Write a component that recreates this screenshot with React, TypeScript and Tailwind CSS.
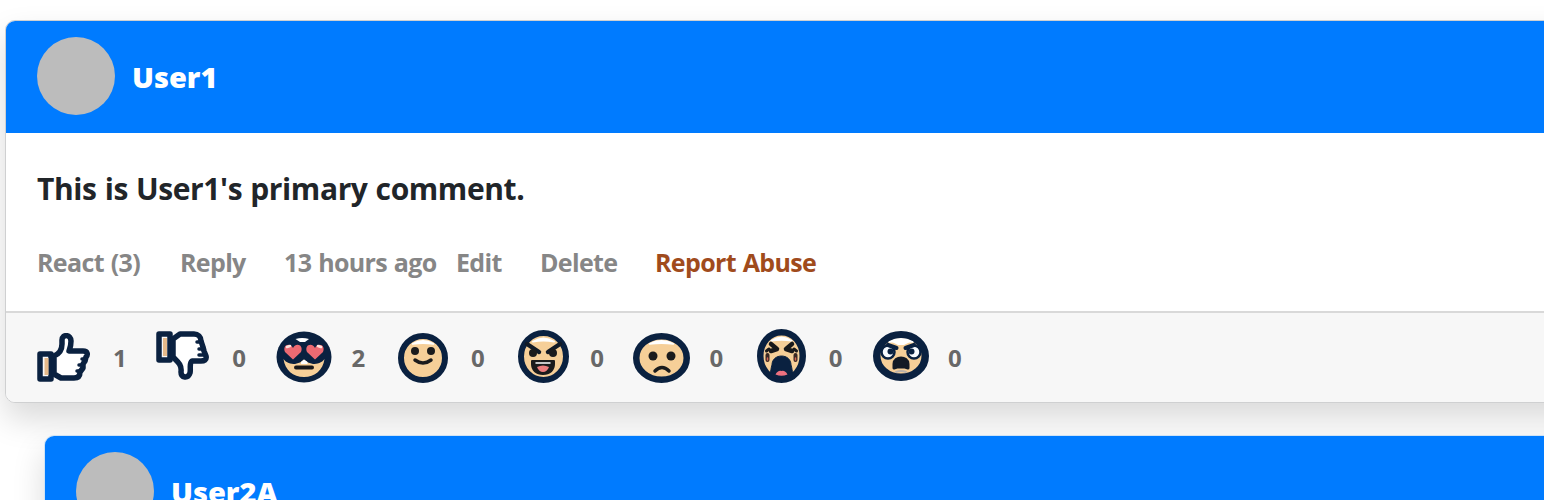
import type { ReactNode } from "react";

const INK = "#0a2140";
const SKIN = "#f6cf98";

function Icon({ w, h, dx = 0, dy, children }: { w: number; h: number; dx?: number; dy: number; children: ReactNode }) {
  return (
    <span className="flex w-[60px] justify-center">
      <svg width={w} height={h} viewBox={`0 0 ${w} ${h}`} style={{ marginTop: dy, marginLeft: dx * 2 }} className="shrink-0" fill="none" strokeLinecap="round" strokeLinejoin="round">
        {children}
      </svg>
    </span>
  );
}

function Face({ w, h, stroke = 6 }: { w: number; h: number; stroke?: number }) {
  return (
    <>
      <ellipse cx={w / 2} cy={h / 2} rx={w / 2 - stroke / 2} ry={h / 2 - stroke / 2} fill={SKIN} stroke={INK} strokeWidth={stroke} />
      <path d={`M${w * 0.29} ${h * 0.22} Q${w / 2} ${h * 0.09} ${w * 0.71} ${h * 0.22} Q${w / 2} ${h * 0.19} ${w * 0.29} ${h * 0.22}Z`} fill="#fff" stroke="#fff" strokeWidth="1.500" />
    </>
  );
}

const ThumbUp = () => (
  <Icon w={54} h={50} dy={0}>
    <path d="M3 21H14V46H3Z" fill="#f8f8f8" stroke={INK} strokeWidth="5.500" />
    <path d="M9.500 25V42" stroke="#e6ba8b" strokeWidth="4" strokeLinecap="butt" />
    <path d="M17 23C22 21 25 17 25 11V7C25 1 34 1 34 8C34 13 33 15 32 18H46C51 18 51 22 49 24L48 28L46 31L46 35L43 39C43 43 41 45 37 45H24L17 41Z" fill="#fff" stroke={INK} strokeWidth="5.500" />
    <path d="M45 26H48M42 32H46M40 38H44" stroke={INK} strokeWidth="3.500" />
  </Icon>
);

const ThumbDown = () => (
  <Icon w={54} h={50} dy={-5}>
    <path d="M3 4H14V30H3Z" fill="#f8f8f8" stroke={INK} strokeWidth="5.500" />
    <path d="M9 8V26" stroke="#e6ba8b" strokeWidth="4" strokeLinecap="butt" />
    <path d="M17 9L24 4H38C42 4 45 7 45 11L47 17L48 21L50 26C51 30 48 31 45 31H36C33 33 35 38 34 43C32 49 25 48 25 42C26 35 22 32 17 27Z" fill="#fff" stroke={INK} strokeWidth="5.500" />
    <path d="M41 12H45M43 19H46M43 25H48" stroke={INK} strokeWidth="3.500" />
  </Icon>
);

const HeartEyes = () => (
  <Icon w={56} h={52} dx={1} dy={-2}>
    <ellipse cx="28" cy="26" rx="27.500" ry="25.500" fill={INK} />
    <path d="M19.500 8Q26 6 33 8L29 11H24Z" fill="#fff" />
    <path d="M7.500 28C10 32 15 33 19 33L24 31.500L28 28.500L32 31.500L37 33C41 33 46 32 48.500 28C47 39 39 46 28 46C17 46 9 39 7.500 28Z" fill={SKIN} />
    <path d="M25 31L28 28.500L31.500 31V33H25Z" fill="#fff" />
    <path d="M17 28.500L9 21C6 14 14 11 17 17C20 11 28 14 25 21ZM39 28.500L31 21C28 14 36 11 39 17C42 11 50 14 47 21Z" fill="#ed6a72" />
    <path d="M11 16L14 15M42 15L45 16" stroke="#ffe4df" strokeWidth="2.500" />
    <path d="M20 36.500H36" stroke="#19191b" strokeWidth="4" />
  </Icon>
);

const Smile = () => (
  <Icon w={50} h={50} dx={1} dy={1}>
    <Face w={50} h={50} stroke={6} />
    <circle cx="17" cy="18" r="4" fill="#1b1b1c" />
    <circle cx="33" cy="18" r="4" fill="#1b1b1c" />
    <path d="M17 27Q25 33 33 27" stroke="#1b1b1c" strokeWidth="3.500" />
  </Icon>
);

const Laugh = () => (
  <Icon w={51} h={53} dx={2} dy={-2}>
    <Face w={51} h={53} />
    <path d="M9 14L21 22M42 14L30 22" stroke="#111a26" strokeWidth="4.500" />
    <circle cx="15" cy="23" r="4" fill="#1b1b1c" />
    <circle cx="35" cy="23" r="4" fill="#1b1b1c" />
    <path d="M14 31H36V34C36 40 32 44 25 44C18 44 14 40 14 34Z" fill="#1b1b1c" stroke="#1b1b1c" strokeWidth="2" />
    <path d="M18 33H32" stroke="#fff" strokeWidth="1.500" />
    <path d="M19 37Q25 34 31 37Q29 42 25 42Q21 42 19 37Z" fill="#ed7d7e" />
  </Icon>
);

const Sad = () => (
  <Icon w={57} h={50} dx={1.5} dy={1}>
    <Face w={57} h={50} stroke={6.5} />
    <circle cx="20" cy="23" r="4.500" fill="#1b1b1c" />
    <circle cx="38" cy="23" r="4.500" fill="#1b1b1c" />
    <path d="M22 38Q29 31 36 38" stroke="#1b1b1c" strokeWidth="3.500" />
  </Icon>
);

const Cry = () => (
  <Icon w={49} h={54} dx={2} dy={-3}>
    <Face w={49} h={54} stroke={6.5} />
    <path d="M14 15L20 20L14 22M35 15L29 20L35 22" stroke="#19191b" strokeWidth="4.500" />
    <path d="M9.500 22L12 20M39.500 22L37 20" stroke="#19191b" strokeWidth="3" />
    <path d="M10.500 26V31M38.500 26V31" stroke="#392824" strokeWidth="4" />
    <path d="M10.500 29V31M38.500 29V31" stroke="#d76655" strokeWidth="1.500" />
    <path d="M13 46C14 41 14 39 15 36C15 24 34 24 34 36C35 39 35 41 36 46L31 50H18Z" fill={INK} stroke={INK} strokeWidth="1" />
    <path d="M18.500 45.500Q21 41 24.500 42Q28 41 30.500 45.500Q24.500 48 18.500 45.500Z" fill="#ed7180" />
  </Icon>
);

const Angry = () => (
  <Icon w={56} h={50} dx={2} dy={-3}>
    <Face w={56} h={50} stroke={7.5} />
    <path d="M19 11Q28 6 37 11L31 14H25Z" fill="#fff" />
    <circle cx="15" cy="21" r="6.500" fill="#f8fbff" stroke={INK} strokeWidth="2.500" />
    <circle cx="41" cy="21" r="6.500" fill="#f8fbff" stroke={INK} strokeWidth="2.500" />
    <path d="M15 14L23.500 17M32.500 17L41 14" stroke={INK} strokeWidth="4" />
    <circle cx="17.500" cy="20.500" r="3" fill={INK} />
    <circle cx="38.500" cy="20.500" r="3" fill={INK} />
    <path d="M21 37V33C21 25 35 25 35 33V37L32 36H24Z" fill="#141b26" stroke="#141b26" strokeWidth="3" />
    <path d="M23 41Q28 39 33 41" stroke="#b9b1a9" strokeWidth="2" />
  </Icon>
);

const reactions = [
  { icon: <ThumbUp />, count: 1 },
  { icon: <ThumbDown />, count: 0 },
  { icon: <HeartEyes />, count: 2 },
  { icon: <Smile />, count: 0 },
  { icon: <Laugh />, count: 0 },
  { icon: <Sad />, count: 0 },
  { icon: <Cry />, count: 0 },
  { icon: <Angry />, count: 0 },
];

function Header({ name }: { name: string }) {
  return (
    <div className="flex h-[112px] shrink-0 items-start rounded-t-[9px] bg-[#007bff] pt-4 pl-[31px]">
      <div className="size-[78px] shrink-0 rounded-full bg-[#bcbcbc]" />
      <span className="ml-[17px] pt-[20px] text-[29px] leading-[40px] font-extrabold tracking-[0px] text-white">{name}</span>
    </div>
  );
}

export default function App() {
  return (
    <div className="h-[500px] w-full overflow-hidden bg-white pt-[20px] pl-[5px] font-['Open_Sans','Noto_Sans',sans-serif]">
      <article className="h-[383px] w-[1600px] rounded-[10px] border border-[#cfd0d1] bg-white shadow-[0_16px_32px_rgba(0,0,0,0.15)]">
        <Header name="User1" />
        <div className="h-[178px] pl-[31px] whitespace-nowrap">
          <p className="pt-[36px] text-[30px] leading-[40px] font-bold tracking-[-0.4px] [word-spacing:0.7px] text-[#212529]">This is User1's primary comment.</p>
          <div className="flex pt-[35px] text-[25px] leading-[36px] font-bold tracking-[-0.65px] [word-spacing:1px] text-[#868686]">
            <span className="w-[143px]">React (3)</span>
            <span className="w-[104px]">Reply</span>
            <span className="w-[172px]">13 hours ago</span>
            <span className="w-[84px]">Edit</span>
            <span className="w-[115px]">Delete</span>
            <span className="text-[#a04b1c]">Report Abuse</span>
          </div>
        </div>
        <div className="flex h-[91px] items-center rounded-b-[9px] border-t-2 border-[#d9d9d9] bg-[#f7f7f7] pl-[28px]">
          {reactions.map((r, i) => (
            <div key={i} className="flex w-[119.3px] items-center">
              {r.icon}
              <span className="ml-[19px] text-[24px] leading-[36px] font-bold text-[#686868]">{r.count}</span>
            </div>
          ))}
        </div>
      </article>
      <article className="mt-[32px] ml-[39px] h-[383px] w-[1600px] rounded-[10px] border border-[#cfe3f5] bg-white shadow-[0_16px_32px_rgba(0,0,0,0.15)]">
        <Header name="User2A" />
      </article>
    </div>
  );
}
